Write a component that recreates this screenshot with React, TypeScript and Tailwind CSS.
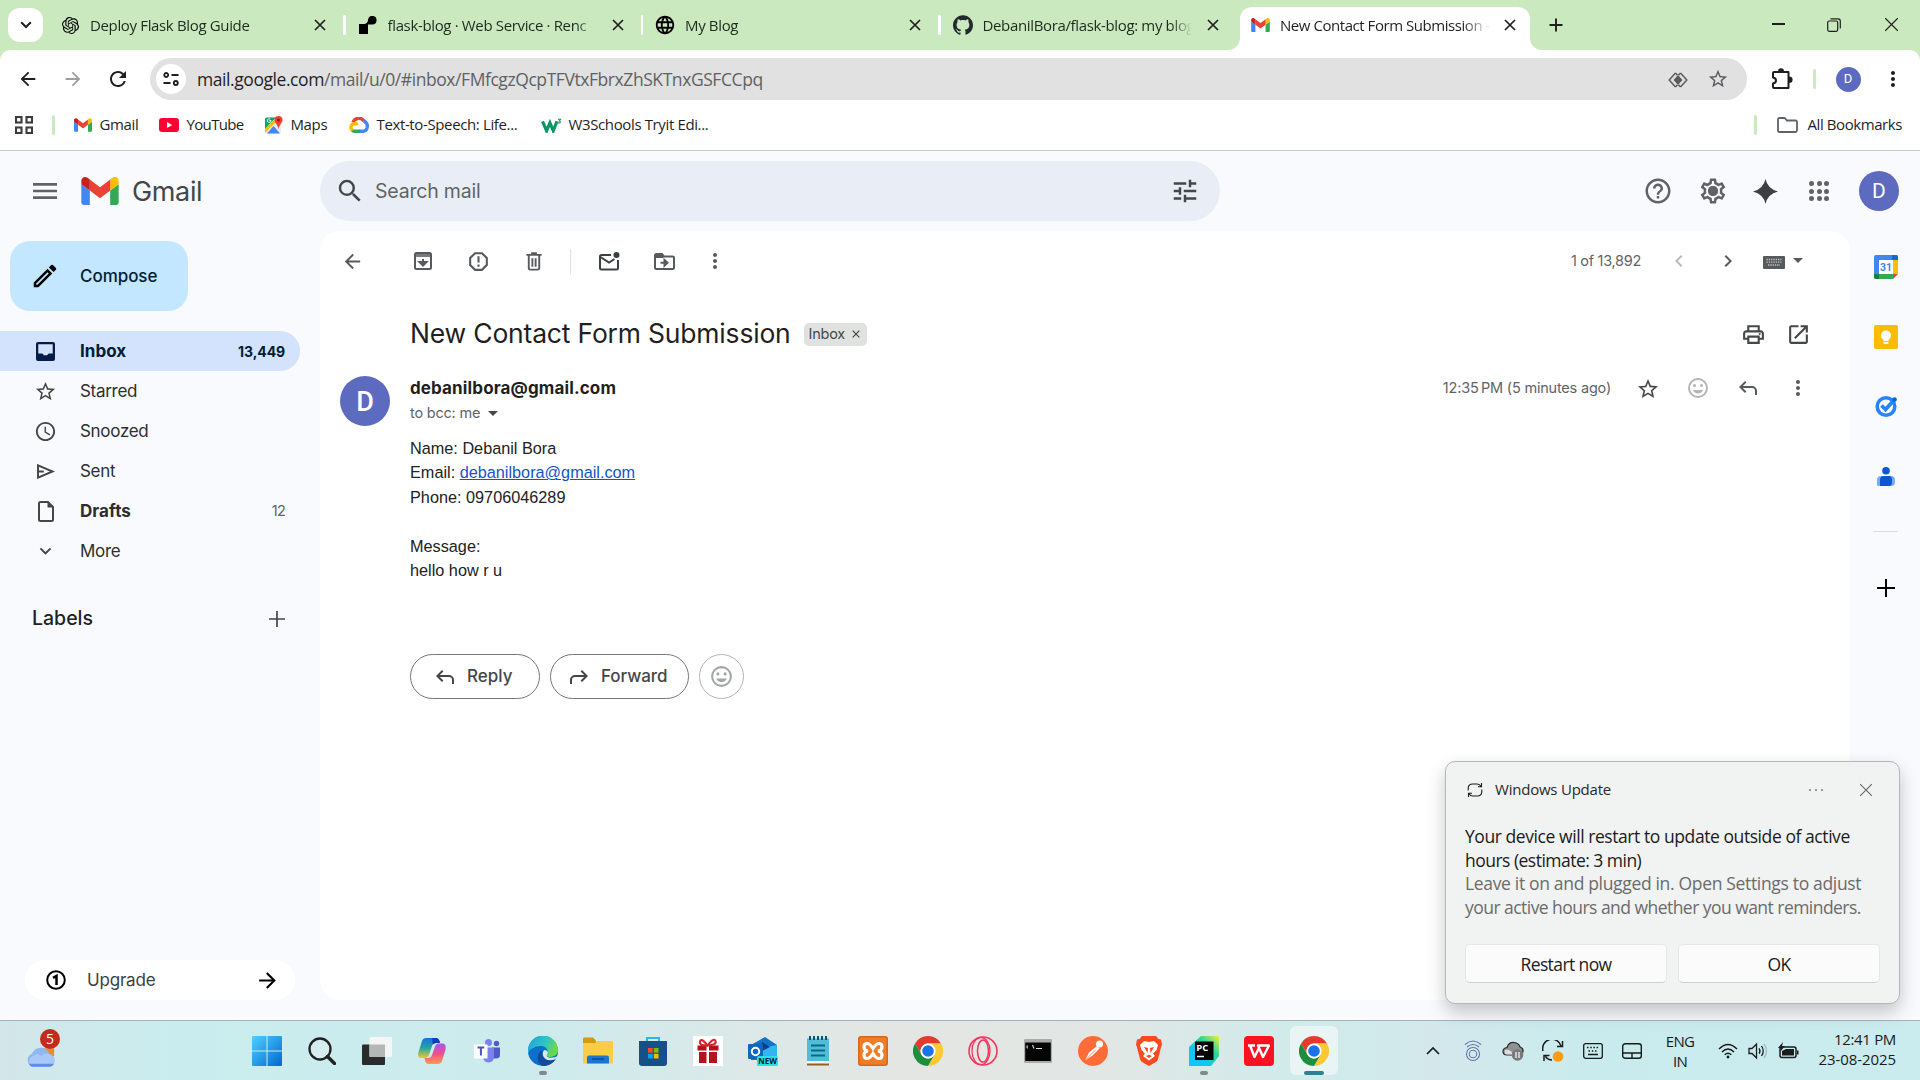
import type { ReactNode } from "react";
import {
  MdArrowBack, MdArrowForward, MdRefresh, MdStarBorder, MdMoreVert, MdMenu, MdSearch, MdTune,
  MdHelpOutline, MdOutlineSettings, MdReportGmailerrorred, MdChevronLeft,
  MdChevronRight, MdArrowDropDown, MdOutlinePrint, MdOpenInNew,
  MdOutlineModeEdit, MdAccessTime, MdExpandMore, MdLanguage,
} from "react-icons/md";
import { SiOpenai, SiGithub } from "react-icons/si";

/* ---------- shared drawings ---------- */

function GmailMark({ className }: { className: string }) {
  return (
    <svg viewBox="52 42 88 66" className={className}>
      <path fill="#4285f4" d="M58 108h14V74L52 59v43c0 3.32 2.69 6 6 6" />
      <path fill="#34a853" d="M120 108h14c3.32 0 6-2.69 6-6V59l-20 15" />
      <path fill="#fbbc04" d="M120 48v26l20-15v-8c0-7.42-8.47-11.65-14.4-7.2" />
      <path fill="#ea4335" d="M72 74V48l24 18 24-18v26L96 92" />
      <path fill="#c5221f" d="M52 51v8l20 15V48l-5.6-4.2c-5.94-4.45-14.4-.22-14.4 7.2" />
    </svg>
  );
}

function ReplyIcon({ className }: { className: string }) {
  return (
    <svg viewBox="0 0 24 24" className={className} fill="currentColor">
      <path d="M19 19v-4a3 3 0 0 0-3-3H6.8l3.6 3.6L9 17l-6-6 6-6 1.4 1.4L6.8 10H16a5 5 0 0 1 5 5v4z" />
    </svg>
  );
}

function Smiley({ className }: { className: string }) {
  return (
    <svg viewBox="0 0 24 24" className={className}>
      <circle cx="12" cy="12" r="9" fill="none" stroke="currentColor" strokeWidth="2" />
      <circle cx="8.5" cy="9.5" r="1.5" fill="currentColor" />
      <circle cx="15.5" cy="9.5" r="1.5" fill="currentColor" />
      <path d="M6.9 14h10.2a5.5 5.5 0 0 1-10.2 0z" fill="currentColor" />
    </svg>
  );
}

function Cross({ className, width = 1.4 }: { className: string; width?: number }) {
  return (
    <svg viewBox="0 0 12 12" className={className} fill="none" stroke="currentColor" strokeWidth={width}>
      <path d="M1 1l10 10M11 1L1 11" />
    </svg>
  );
}

function ChromeIcon() {
  return (
    <svg viewBox="0 0 48 48" className="size-[30px]">
      <path fill="#e33b2e" d="M3.215 12A24 24 0 0 1 44.785 12H24A12 12 0 0 0 13.608 30z" />
      <path fill="#fcc934" d="M44.785 12A24 24 0 0 1 24 48L34.392 30A12 12 0 0 0 24 12z" />
      <path fill="#1e8e3e" d="M24 48A24 24 0 0 1 3.215 12L13.608 30A12 12 0 0 0 34.392 30z" />
      <circle cx="24" cy="24" r="12" fill="#fff" />
      <circle cx="24" cy="24" r="9.3" fill="#1a73e8" />
    </svg>
  );
}

/* ---------- browser chrome ---------- */

function Tab({ icon, title, last }: { icon: ReactNode; title: string; last?: boolean }) {
  return (
    <div className="flex h-full w-[297.5px] shrink-0 items-center">
      <div className="ml-[12px] flex w-[22px] shrink-0 items-center justify-center">{icon}</div>
      <div className="ml-[9px] w-[209px] whitespace-nowrap text-[15px] leading-5 tracking-[-0.35px] text-[#1f2a1f] [mask-image:linear-gradient(to_right,#000_90%,transparent)]">
        {title}
      </div>
      <Cross className="ml-[15px] size-[12px] shrink-0 text-[#1f1f1f]" width={1.7} />
      <div className={last ? "hidden" : "ml-auto mr-[-1px] h-5 w-[2.5px] rounded bg-white"} />
    </div>
  );
}

function TabStrip() {
  return (
    <div className="flex h-[50px] items-center bg-[#cbe9bf] pr-[21px]">
      <div className="ml-2 flex h-[34px] w-[35px] items-center justify-center rounded-[12px] bg-white">
        <svg viewBox="0 0 12 8" className="h-[8px] w-[12px]" fill="none" stroke="#1f1f1f" strokeWidth="2">
          <path d="M1.200 1.200L6 6l4.800-4.800" />
        </svg>
      </div>
      <div className="ml-[4px] flex h-full">
        <Tab icon={<SiOpenai className="size-[17px]" />} title="Deploy Flask Blog Guide" />
        <Tab
          icon={
            <svg viewBox="0 0 18 18" className="size-[18px]">
              <path d="M0 8h4.500a4 4 0 0 0 4.500-4.500A4.300 4.300 0 1 1 13.200 8.500H9V18H0z" />
            </svg>
          }
          title="flask-blog · Web Service · Renc"
        />
        <Tab icon={<MdLanguage className="size-[22px]" />} title="My Blog" />
        <Tab icon={<SiGithub className="size-[20px] text-[#24292f]" />} title="DebanilBora/flask-blog: my blog" last />
      </div>
      <div className="relative mt-[7px] ml-[3px] flex h-[43px] w-[290px] items-center rounded-t-[12px] bg-white">
        <svg viewBox="0 0 12 12" className="absolute bottom-0 -left-3 size-3" fill="#fff"><path d="M12 0v12H0A12 12 0 0 0 12 0z" /></svg>
        <svg viewBox="0 0 12 12" className="absolute -right-3 bottom-0 size-3" fill="#fff"><path d="M0 0v12h12A12 12 0 0 1 0 0z" /></svg>
        <GmailMark className="mt-[-7px] ml-[11px] h-[14px] w-[19px]" />
        <div className="mt-[-7px] ml-[10px] w-[211px] whitespace-nowrap text-[15px] leading-5 tracking-[-0.45px] text-[#1f1f1f] [mask-image:linear-gradient(to_right,#000_86%,transparent)]">
          New Contact Form Submission -
        </div>
        <Cross className="mt-[-7px] ml-[13px] size-[12px] shrink-0 text-[#1f1f1f]" width={1.7} />
      </div>
      <svg viewBox="0 0 14 14" className="ml-[19px] size-[14px]" stroke="#1f1f1f" strokeWidth="1.900"><path d="M7 .5v13M.5 7h13" /></svg>
      <div className="mt-[-1px] ml-auto flex items-center text-[#1f1f1f]">
        <div className="mt-[-1px] mr-[42px] h-[1.500px] w-[13px] bg-[#1f1f1f]" />
        <svg viewBox="0 0 14 14" className="mr-[43.500px] size-[14px]" fill="none" stroke="currentColor" strokeWidth="1.200">
          <rect x=".7" y="3" width="10" height="10.300" rx="1.500" />
          <path d="M3.500 .8h7.500a2.300 2.300 0 0 1 2.300 2.300v7.500" />
        </svg>
        <Cross className="size-[15px]" width={0.9} />
      </div>
    </div>
  );
}

function AddressBar() {
  return (
    <div className="bg-[#cbe9bf]">
      <div className="flex h-[58px] items-center rounded-t-[10px] bg-white pt-0">
        <MdArrowBack className="ml-[17px] size-[22px] text-[#1f1f1f]" />
        <MdArrowForward className="ml-[23px] size-[22px] text-[#9e9e9e]" />
        <MdRefresh className="ml-[22px] size-[24px] text-[#1f1f1f]" />
        <div className="ml-[20px] flex h-[42px] w-[1597px] items-center rounded-full bg-[#e1e1e1]">
          <div className="ml-[6px] flex size-[30px] items-center justify-center rounded-full bg-white">
            <svg viewBox="0 0 16 14" className="h-[14px] w-[16px]" fill="none" stroke="#1f1f1f" strokeWidth="1.800">
              <circle cx="3.200" cy="3" r="2" /><path d="M8.500 3H15.500M.5 11h7" /><circle cx="12.800" cy="11" r="2" />
            </svg>
          </div>
          <div className="ml-[11px] whitespace-nowrap text-[17.5px] leading-6 tracking-[-0.43px] text-[#5f6164]">
            <span className="text-[#1f1f1f]">mail.google.com</span>/mail/u/0/#inbox/FMfcgzQcpTFVtxFbrxZhSKTnxGSFCCpq
          </div>
          <svg viewBox="0 0 20 16" className="mt-[2px] mr-[19px] ml-auto h-[16px] w-[20px]" fill="none" stroke="#5a5c5f" strokeWidth="1.500">
            <path d="M7.500 1L1.200 8l6.300 7M12.500 1l6.300 7-6.300 7M7.500 1l2 2.300M12.500 1l-2 2.300M7.500 15l2-2.300M12.500 15l-2-2.300" />
            <path d="M10 3l4.500 5-4.500 5-4.500-5z" fill="#5a5c5f" stroke="none" />
          </svg>
          <MdStarBorder className="mr-[18px] size-[22px] text-[#5a5c5f]" />
        </div>
        <svg viewBox="0 0 22 22" className="ml-[24px] size-[22px]" fill="none" stroke="#1f1f1f" strokeWidth="2">
          <path d="M3 4h14.500V20H3q-1 0-1-1v-3.500q3-.5 3-3t-3-3V5q0-1 1-1z" strokeLinejoin="round" />
          <path d="M8 3.500a2 2.300 0 0 1 4 0zM18 9.500a2.300 2 0 0 1 0 4.500z" fill="#1f1f1f" />
        </svg>
        <div className="ml-[20px] h-[20px] w-[2.500px] rounded bg-[#cbe9bf]" />
        <div className="ml-[20px] flex size-[25px] items-center justify-center rounded-full bg-[#5c6bc0] font-[Roboto] text-[13px] text-white">D</div>
        <MdMoreVert className="ml-[20px] size-[24px] text-[#1f1f1f]" />
      </div>
    </div>
  );
}

function BookmarksBar() {
  const label = "text-[15px] leading-5 tracking-[-0.37px] text-[#1f1f1f] whitespace-nowrap pb-[2px]";
  return (
    <div className="flex h-[43px] items-start border-b border-[#c9cbcf] bg-white">
      <div className="flex h-[34px] w-full items-center">
        <svg viewBox="0 0 18 18" className="ml-[15px] size-[18px]" fill="none" stroke="#3c3c3c" strokeWidth="2.100">
          <rect x="1" y="1" width="5.500" height="5.500" /><rect x="11.500" y="1" width="5.500" height="5.500" />
          <rect x="1" y="11.500" width="5.500" height="5.500" /><rect x="11.500" y="11.500" width="5.500" height="5.500" />
        </svg>
        <div className="ml-[19px] h-5 w-[2.500px] rounded bg-[#cbe9bf]" />
        <GmailMark className="ml-[19px] h-[14px] w-[18px]" />
        <span className={`${label} ml-[8px] w-[40px]`}>Gmail</span>
        <svg viewBox="0 0 20 14" className="ml-[19px] h-[14px] w-[20px]"><rect width="20" height="14" rx="3.200" fill="#f03" /><path d="M8 4l5.200 3L8 10z" fill="#fff" /></svg>
        <span className="ml-[8px] w-[58px] whitespace-nowrap pb-[2px] text-[15px] leading-5 tracking-[-0.65px] text-[#1f1f1f]">YouTube</span>
        <svg viewBox="0 0 18 18" className="ml-[20px] size-[18px]">
          <rect x="0" y="1.500" width="16" height="16" rx="1.500" fill="#e8eaed" />
          <path d="M1.500 1.500H11L0 13V3a1.500 1.500 0 0 1 1.500-1.500z" fill="#1aa260" />
          <path d="M2 17.500L8.500 10l6.500 7.500z" fill="#4285f4" />
          <path d="M0 13l9-9 2 2-11 11z" fill="#fbbc04" />
          <path d="M13.500 0a4 4 0 0 1 4 4c0 3-3 4-4 9-1-5-4-6-4-9a4 4 0 0 1 4-4z" fill="#ea4335" /><circle cx="13.500" cy="4" r="1.500" fill="#8c1f17" />
          <path d="M6 4.500H4.500M6 4.500A1.800 1.800 0 1 1 5 3" fill="none" stroke="#fff" strokeWidth=".9" />
        </svg>
        <span className={`${label} ml-[8px] w-[38px]`}>Maps</span>
        <svg viewBox="0 0 20 16" className="ml-[20px] h-[16px] w-[20px]" fill="none" strokeWidth="3.400">
          <path d="M4 5.500A6.200 6.200 0 0 1 15 4" stroke="#ea4335" />
          <path d="M14.500 4a5 5 0 0 1 3.300 7" stroke="#4285f4" />
          <path d="M18 11a4 4 0 0 1-3.500 3.200H10" stroke="#4285f4" />
          <path d="M10.500 14.200H5.500A3.800 3.800 0 0 1 3 13.300" stroke="#34a853" />
          <path d="M3.500 13.500A3.900 3.900 0 0 1 5.500 6.500a3.900 3.900 0 0 1 3 1.500" stroke="#fbbc04" />
        </svg>
        <span className={`${label} ml-[8px] w-[144px]`}>Text-to-Speech: Life...</span>
        <svg viewBox="0 0 20 14" className="ml-[20px] h-[15px] w-[21px]" fill="none" stroke="#059862">
          <path d="M1.500 3l3.800 9L8.500 4.500l3.200 7.500 3.500-9" strokeWidth="3" />
          <path d="M16.200 1h2.500l-1.300 1.700c1.300 0 1.800 2.500-1.200 1.800" strokeWidth="1" />
        </svg>
        <span className={`${label} ml-[7px]`}>W3Schools Tryit Edi...</span>
        <div className="mr-[20px] ml-auto h-5 w-[2.500px] rounded bg-[#cbe9bf]" />
        <svg viewBox="0 0 21 16" className="h-[16px] w-[21px]" fill="none" stroke="#5f6368" strokeWidth="1.800"><path d="M2.500 1h5.200l2.200 2.500h8.600q1.500 0 1.500 1.500v8.500q0 1.500-1.500 1.500h-16q-1.500 0-1.500-1.500V2.500q0-1.500 1.500-1.500z" /></svg>
        <span className="mr-[18px] ml-[10px] whitespace-nowrap pb-[2px] text-[15px] leading-5 tracking-[-0.42px] text-[#1f1f1f]">All Bookmarks</span>
      </div>
    </div>
  );
}

/* ---------- mail client ---------- */

function MailHeader() {
  return (
    <div className="flex h-[80px] items-center text-[#444746]">
      <MdMenu className="ml-[29px] size-[32px] text-[#5f6368]" />
      <GmailMark className="ml-[20px] h-[28px] w-[38px]" />
      <span className="ml-[13px] w-[188px] pt-[2px] text-[27px] leading-8 tracking-[-0.35px]">Gmail</span>
      <div className="flex h-[60px] w-[900px] items-center rounded-full bg-[#e9eef6]">
        <MdSearch className="ml-[15px] size-[30px]" />
        <span className="ml-[10px] text-[19.500px] leading-6 tracking-[-0.2px] text-[#5f6368]">Search mail</span>
        <MdTune className="mr-[20px] ml-auto size-[30px]" />
      </div>
      <MdHelpOutline className="ml-[423px] size-[30px] text-[#5f6368]" />
      <div className="relative ml-[25px]">
        <MdOutlineSettings className="size-[30px] text-[#5f6368]" />
        <div className="absolute top-[10px] left-[10px] size-[10px] rounded-full bg-[#5f6368]" />
      </div>
      <svg viewBox="0 0 24 24" className="ml-[25px] size-[25px]" fill="#3c4043"><path d="M12 0q2 9.500 12 12-10 2.500-12 12Q10 14.500 0 12 10 9.500 12 0z" /></svg>
      <div className="ml-[31px] grid grid-cols-3 gap-[2.500px]">
        {[0, 1, 2, 3, 4, 5, 6, 7, 8].map((i) => <div key={i} className="size-[5px] rounded-full bg-[#5f6368]" />)}
      </div>
      <div className="ml-[30px] flex size-[40px] items-center justify-center rounded-full bg-[#5c6bc0] pt-[2px] font-[Roboto] text-[21px] text-white">D</div>
    </div>
  );
}

function NavRow({ icon, text, count, bold, active }: { icon: ReactNode; text: string; count?: string; bold?: boolean; active?: boolean }) {
  return (
    <div className={active ? "flex h-[40px] w-[300px] items-center rounded-r-full bg-[#d3e3fd] text-[#001d35]" : "flex h-[40px] w-[300px] items-center text-[#2c2e30]"}>
      <div className={active ? "ml-[34px] flex w-[23px] justify-center text-[#041e49]" : "ml-[34px] flex w-[23px] justify-center text-[#444746]"}>{icon}</div>
      <span className={bold ? "ml-[23px] pt-[2px] text-[17px] font-bold tracking-[0.05px]" : "ml-[23px] pt-[2px] text-[17px] tracking-[-0.3px]"}>{text}</span>
      <span className={active ? "mr-[15px] ml-auto text-[14px] font-bold tracking-[-0.1px]" : "mr-[15px] ml-auto text-[14.500px] tracking-[-0.8px] text-[#5f6368]"}>{count}</span>
    </div>
  );
}

function Sidebar() {
  return (
    <div className="flex w-[320px] shrink-0 flex-col">
      <div className="mt-[10px] ml-[10px] flex h-[70px] w-[178px] items-center rounded-[20px] bg-[#c2e7ff] text-[#001d35]">
        <MdOutlineModeEdit className="ml-[20px] size-[30px] text-black" />
        <span className="ml-[20px] pt-[2px] text-[17px] font-medium tracking-[-0.05px]">Compose</span>
      </div>
      <div className="mt-[20px]">
        <NavRow
          active
          bold
          icon={<svg viewBox="0 0 19 19" className="size-[19px]"><rect width="19" height="19" rx="2" fill="#041e49" /><path d="M2.300 2.300h14.400v9.200h-4L11 13.200H8l-1.700-1.700h-4z" fill="#d3e3fd" /></svg>}
          text="Inbox"
          count="13,449"
        />
        <NavRow icon={<MdStarBorder className="size-[23px]" />} text="Starred" />
        <NavRow icon={<MdAccessTime className="size-[25px]" />} text="Snoozed" />
        <NavRow
          icon={<svg viewBox="0 0 20 17" className="h-[15px] w-[19px]" fill="none" stroke="currentColor" strokeWidth="2.200"><path d="M1.500 1.500v14L18 8.500zM1.500 8.500H8" /></svg>}
          text="Sent"
        />
        <NavRow
          bold
          icon={<svg viewBox="0 0 16 21" className="h-[21px] w-[16px]" fill="none" stroke="currentColor" strokeWidth="2"><path d="M2.500 1H10l5 5v12.500q0 1.500-1.500 1.500h-11Q1 20 1 18.500v-16Q1 1 2.500 1z" /><path d="M9.500 1v5.500H15z" fill="currentColor" stroke="none" /></svg>}
          text="Drafts"
          count="12"
        />
        <NavRow icon={<MdExpandMore className="size-[24px]" />} text="More" />
      </div>
      <div className="mt-[27px] flex h-[40px] items-center">
        <span className="ml-[32px] pt-[2px] text-[19.500px] font-medium tracking-[0px] text-[#1f1f1f]">Labels</span>
        <svg viewBox="0 0 16 16" className="mt-[1px] mr-[35px] ml-auto size-[16px]" stroke="#444746" strokeWidth="1.700"><path d="M8 0v16M0 8h16" /></svg>
      </div>
      <div className="mt-auto mb-[20px] ml-[25px] flex h-[40px] w-[270px] items-center rounded-full bg-white">
        <svg viewBox="0 0 20 20" className="ml-[21px] size-[20px]" fill="none" stroke="#000"><circle cx="10" cy="10" r="8.800" strokeWidth="2" /><path d="M7 7.800l3.500-2V15" strokeWidth="2.500" /></svg>
        <span className="ml-[21px] pt-[2px] text-[17px] tracking-[-0.2px] text-[#3c4043]">Upgrade</span>
        <MdArrowForward className="mr-[15px] ml-auto size-[25px] text-black" />
      </div>
    </div>
  );
}

function MailToolbar() {
  return (
    <div className="flex h-[60px] items-center text-[#575a5c]">
      <MdArrowBack className="ml-[21px] size-[23px]" />
      <svg viewBox="0 0 18 18" className="ml-[50px] size-[18px]" fill="none" stroke="currentColor" strokeWidth="2">
        <rect x="1" y="1" width="16" height="16" rx="1.500" /><path d="M1 3h16" strokeWidth="4" strokeOpacity=".8" /><path d="M9 7v6M5.500 10l3.500 3.500L12.500 10z" />
      </svg>
      <MdReportGmailerrorred className="ml-[34px] size-[25px]" />
      <svg viewBox="0 0 16 20" className="ml-[34.500px] h-[19px] w-[16px]" fill="none" stroke="currentColor" strokeWidth="2">
        <path d="M0 3h16M5 1.200h6M2.500 3v14q0 1.500 1.500 1.500h8q1.500 0 1.500-1.500V3M6.300 6.500v9M9.700 6.500v9" />
      </svg>
      <div className="ml-[28.500px] h-[25px] w-px bg-[#dfe1e4]" />
      <svg viewBox="0 0 21 19" className="ml-[27.500px] h-[19px] w-[21px] text-[#3c4043]" fill="none" stroke="currentColor" strokeWidth="2">
        <path d="M12 3H2.500Q1 3 1 4.500v11.500q0 1.500 1.500 1.500h15q1.500 0 1.500-1.500V8M1.500 5l8.500 5.500L15.500 7" /><circle cx="17.500" cy="3" r="3" fill="currentColor" stroke="none" />
      </svg>
      <svg viewBox="0 0 21 17" className="ml-[34.500px] h-[17px] w-[21px]" fill="none" stroke="currentColor" strokeWidth="2">
        <path d="M2.500 1H8l2 2.500h8.500Q20 3.500 20 5v9.500q0 1.500-1.500 1.500h-16Q1 16 1 14.500v-12Q1 1 2.500 1z" /><path d="M1.500 3.500h8" strokeWidth="3" /><path d="M6.500 9.800h7M10.500 7l3 2.800-3 2.800z" />
      </svg>
      <MdMoreVert className="ml-[28px] size-[24px]" />
      <span className="ml-auto whitespace-nowrap text-[14.500px] tracking-[-0.3px] text-[#5f6368]">1 of 13,892</span>
      <MdChevronLeft className="ml-[26px] size-[24px] text-[#b8babc]" />
      <MdChevronRight className="ml-[25px] size-[24px]" />
      <svg viewBox="0 0 22 13" className="mt-[3px] ml-[23px] h-[13px] w-[22px]">
        <rect width="22" height="13" rx="1" fill="currentColor" />
        <path d="M3.500 3.500h15M3.500 6.200h15M5 9h12" stroke="#c4c6c8" strokeWidth="1.300" strokeDasharray="1.300 1" />
      </svg>
      <MdArrowDropDown className="mt-[-3px] mr-[40px] ml-[1px] size-[24px]" />
    </div>
  );
}

function Message() {
  return (
    <div className="flex flex-1 flex-col rounded-[20px] bg-white">
      <MailToolbar />
      <div className="mt-[23px] flex h-[40px] items-center">
        <h1 className="ml-[90px] whitespace-nowrap text-[26.500px] tracking-[-0.2px] text-[#1f1f1f]">New Contact Form Submission</h1>
        <div className="ml-[13px] flex h-[23px] w-[63px] items-center rounded-[5px] bg-[#e0e2e0] text-[14.500px] tracking-[-0.25px] text-[#444746]">
          <span className="ml-[5px]">Inbox</span>
          <Cross className="ml-[7px] size-[8px]" width={1.8} />
        </div>
        <MdOutlinePrint className="ml-auto size-[25px] text-[#444746]" />
        <MdOpenInNew className="mr-[39px] ml-[20px] size-[25px] text-[#444746]" />
      </div>
      <div className="mt-[17px] flex">
        <div className="mt-[5px] ml-[20px] flex size-[50px] items-center justify-center rounded-full bg-[#5c6bc0] pt-[2px] font-[Roboto] text-[27px] font-medium text-white">D</div>
        <div className="ml-[20px]">
          <div className="h-[33px] text-[17px] leading-[35px] font-bold tracking-[0.13px] text-[#1f1f1f]">debanilbora@gmail.com</div>
          <div className="flex h-[18px] items-center text-[14.500px] tracking-[-0.2px] text-[#5f6368]">
            to bcc: me <MdArrowDropDown className="ml-[1px] size-[24px] text-[#444746]" />
          </div>
          <div className="mt-[14px] h-[150px] whitespace-nowrap font-['Liberation_Sans'] text-[16.250px] leading-[24.400px] text-[#222]">
            <div>Name: Debanil Bora</div>
            <div>Email: <span className="text-[#1155cc] underline">debanilbora@gmail.com</span></div>
            <div>Phone: 09706046289</div>
            <div className="mt-[24.400px]">Message:</div>
            <div>hello how r u</div>
          </div>
        </div>
        <div className="ml-auto flex h-[34px] items-center text-[#575a5c]">
          <span className="mr-[25px] whitespace-nowrap text-[14.500px] tracking-[-0.2px] text-[#5f6368]">12:35&#8239;PM (5 minutes ago)</span>
          <MdStarBorder className="mt-[2px] size-[24px] text-[#444746]" />
          <Smiley className="ml-[26px] size-[24px] text-[#b3b5b7]" />
          <ReplyIcon className="ml-[26px] size-[24px]" />
          <MdMoreVert className="mr-[40.500px] ml-[25.500px] size-[24px]" />
        </div>
      </div>
      <div className="mt-[68px] ml-[90px] flex gap-[10px] text-[17px] font-medium text-[#444746]">
        <div className="flex h-[45px] w-[130px] items-center rounded-full border border-[#747775]">
          <ReplyIcon className="ml-[22px] size-[24px]" /><span className="ml-[10px] tracking-[0px]">Reply</span>
        </div>
        <div className="flex h-[45px] w-[139px] items-center rounded-full border border-[#747775]">
          <ReplyIcon className="ml-[16px] size-[24px] -scale-x-100" /><span className="ml-[10px] tracking-[-0.05px]">Forward</span>
        </div>
        <div className="flex size-[45px] items-center justify-center rounded-full border border-[#b3b5b7] text-[#a3a5a7]">
          <Smiley className="size-[25px]" />
        </div>
      </div>
    </div>
  );
}

function SidePanel() {
  return (
    <div className="flex w-[70px] shrink-0 flex-col items-center pl-[1px]">
      <svg viewBox="0 0 24 24" className="mt-[24px] size-[24px]">
        <rect width="24" height="24" rx="2" fill="#4285f4" /><path d="M18 5h6v14h-6z" fill="#fbbc04" /><path d="M18 0h4q2 0 2 2v3h-6z" fill="#1967d2" />
        <path d="M5 19h14v5H5z" fill="#34a853" /><path d="M0 19h5v5H2q-2 0-2-2z" fill="#188038" /><path d="M19 19h5l-5 5z" fill="#ea4335" /><path d="M24 19v5h-5z" fill="#f9fbfe" />
        <path d="M5 5h14v14H5z" fill="#fff" /><text x="12" y="16" textAnchor="middle" fontSize="10.500" fontWeight="700" fontFamily="Roboto" fill="#4285f4">31</text>
      </svg>
      <svg viewBox="0 0 24 24" className="mt-[46px] size-[24px]">
        <rect width="24" height="24" rx="2" fill="#fbbc04" /><circle cx="12" cy="10.500" r="5" fill="#fff" /><path d="M9.500 13h5v3h-5zM9.500 17h5v1.800h-5z" fill="#fff" />
      </svg>
      <svg viewBox="0 0 24 24" className="mt-[45px] size-[24px]" fill="none">
        <circle cx="12" cy="12.500" r="8.800" stroke="#2684fc" strokeWidth="3.500" /><path d="M7.500 11.500l4 4L21 5" stroke="#2684fc" strokeWidth="3.800" /><circle cx="20.500" cy="5.500" r="2.300" fill="#0066da" />
      </svg>
      <svg viewBox="0 0 18 19" className="mt-[49px] h-[19px] w-[18px]">
        <path d="M4 9h10q4 0 4 4v2q0 4-4 4H1.500Q0 19 0 17.500V13q0-4 4-4z" fill="#7baaf7" /><path d="M7 9h5q3 0 3 4v2q0 4-3 4H3v-6q0-4 4-4z" fill="#0b57d0" /><circle cx="9" cy="3.800" r="3.800" fill="#0b57d0" />
      </svg>
      <div className="mt-[45px] h-px w-[25px] bg-[#dadce0]" />
      <svg viewBox="0 0 18 18" className="mt-[47px] size-[18px]" stroke="#000" strokeWidth="2"><path d="M9 0v18M0 9h18" /></svg>
    </div>
  );
}

/* ---------- notification ---------- */

function Toast() {
  const button = "flex h-[39px] flex-1 items-center justify-center rounded-[5px] border border-b-[#cfcfcf] border-[#e6e6e6] bg-[#fbfbfb] tracking-[-0.6px]";
  return (
    <div className="absolute top-[761px] left-[1445px] h-[243px] w-[455px] rounded-[10px] border border-[#b4b6b8] bg-[#f1f2f2] px-[19px] shadow-[0_8px_18px_rgba(0,0,0,0.22)]">
      <div className="mt-[16px] flex h-[24px] items-center">
        <svg viewBox="0 0 16 16" className="ml-[2px] size-[16px]" fill="none" stroke="#1b1b1b" strokeWidth="1.100">
          <path d="M1.200 8.500V6.500q0-4.500 4.500-4.500h4.500q2.500 0 3.800 2.500M14.500 1v3.700H11M14.800 7.500v2q0 4.500-4.500 4.500H5.700q-2.500 0-3.800-2.500M1.500 15v-3.700H5" />
        </svg>
        <span className="ml-[12px] pb-[2px] text-[15px] tracking-[-0.22px] text-[#2a2a2a]">Windows Update</span>
        <svg viewBox="0 0 14 2" className="mr-[36px] ml-auto h-[2px] w-[14px]" fill="#707070"><circle cx="1" cy="1" r=".9" /><circle cx="7" cy="1" r=".9" /><circle cx="13" cy="1" r=".9" /></svg>
        <Cross className="mr-[7px] size-[14px] text-[#6b6b6b]" width={1} />
      </div>
      <div className="mt-[23px] whitespace-nowrap text-[17.500px] leading-[23.600px] text-[#1b1b1b]">
        <div className="tracking-[-0.43px]">Your device will restart to update outside of active</div>
        <div className="tracking-[-0.52px]">hours (estimate: 3 min)</div>
        <div className="tracking-[-0.33px] text-[#6a6c6c]">Leave it on and plugged in. Open Settings to adjust</div>
        <div className="tracking-[-0.54px] text-[#6a6c6c]">your active hours and whether you want reminders.</div>
      </div>
      <div className="mt-[25px] flex gap-[11px] text-[17.500px] text-[#1b1b1b]">
        <div className={button}>Restart now</div>
        <div className={button}>OK</div>
      </div>
    </div>
  );
}

/* ---------- taskbar ---------- */

function TaskIcon({ children, running, active }: { children: ReactNode; running?: boolean; active?: boolean }) {
  return (
    <div className={active ? "relative mx-[3.500px] flex h-[49px] w-[48px] shrink-0 items-center justify-center rounded-[6px] bg-[#e9f4f5]" : "relative flex h-[49px] w-[55.100px] shrink-0 items-center justify-center"}>
      {children}
      <div className={active ? "absolute bottom-0 h-[4px] w-[20px] rounded bg-[#2b8296]" : running ? "absolute bottom-0 h-[4px] w-[8px] rounded bg-[#7e8a8c]" : "hidden"} />
    </div>
  );
}

function Taskbar() {
  return (
    <div className="flex h-[60px] items-center border-t border-[#a3b4b7] bg-[linear-gradient(to_right,#d3e6ea_0%,#c9edee_9%,#cdebed_28%,#dbe9e8_38%,#e4e6e3_47%,#e1e7e5_58%,#cfebea_68%,#d4e8ec_75%,#caebed_82%,#cbecee_100%)]">
      <div className="relative ml-[25px] h-[40px] w-[36px]">
        <svg viewBox="0 0 32 24" className="absolute top-[13px] left-[1px] h-[24px] w-[31px]">
          <path d="M15 4h14v8H18z" fill="#f08a24" />
          <path d="M7 23a7 7 0 0 1-1-13.200Q9 3 16 3.500q6 .5 8 6A7 7 0 0 1 24.500 23z" fill="#8fb7f2" />
          <path d="M6.500 23a6 6 0 0 1 1-11q4-4 8 0 6-5 11 0A6 6 0 0 1 25 23z" fill="#a9c8f8" /><path d="M3 20h26q-1.500 3-4.500 3h-18Q4 23 3 20z" fill="#5f8fe0" />
        </svg>
        <div className="absolute top-[-2px] left-[15px] flex size-[20px] items-center justify-center rounded-full bg-[#c42b1c] text-[14px] leading-none text-white">5</div>
      </div>
      <div className="ml-[178.500px] flex items-center">
        <TaskIcon>
          <svg viewBox="0 0 30 30" className="size-[30px]"><defs><linearGradient id="win" x1="0" y1="0" x2="1" y2="1"><stop stopColor="#4fd0ff" /><stop offset="1" stopColor="#0069d0" /></linearGradient></defs><path fill="url(#win)" d="M0 1q0-1 1-1h13.500v14.500H0zM15.500 0H29q1 0 1 1v13.500H15.500zM0 15.500h14.500V30H1q-1 0-1-1zM15.500 15.500H30V29q0 1-1 1H15.500z" /></svg>
        </TaskIcon>
        <TaskIcon>
          <svg viewBox="0 0 28 28" className="size-[28px]" fill="none" stroke="#222"><circle cx="12" cy="12" r="10.500" strokeWidth="2.300" fill="#e6eeee" fillOpacity=".4" /><path d="M19.500 19.500l7 7" strokeWidth="3.300" strokeLinecap="round" /></svg>
        </TaskIcon>
        <TaskIcon>
          <svg viewBox="0 0 30 28" className="h-[28px] w-[30px]"><rect y="7.500" width="23" height="20.500" rx="1" fill="#2b2b2b" /><rect x="7.500" width="22.500" height="20" rx="1" fill="#f5f5f5" /><path d="M7.500 7.500H23V20H7.500z" fill="#b5b7b7" /></svg>
        </TaskIcon>
        <TaskIcon>
          <svg viewBox="0 0 28 26" className="h-[26px] w-[28px]">
            <defs><linearGradient id="cpA" x1="0" y1="0" x2="0" y2="1"><stop stopColor="#1b6fe0" /><stop offset=".5" stopColor="#23a7a0" /><stop offset="1" stopColor="#f4c52f" /></linearGradient><linearGradient id="cpB" x1="0" y1="0" x2="0" y2="1"><stop stopColor="#a259f0" /><stop offset=".5" stopColor="#ef4f8e" /><stop offset="1" stopColor="#ff9d4d" /></linearGradient></defs>
            <path d="M8 0h10q3 0 4 5h-4q-3 0-4 3l-3 9q-1 3-4 3H3q-4 0-2.500-6L4 3q1-3 4-3z" fill="url(#cpA)" />
            <path d="M20 26H10q-2.500 0-3.500-6H10q3 0 4-3l3-8.500q1-3 4-3h3.500q4 0 3 6L24 23q-1 3-4 3z" fill="url(#cpB)" /><path d="M14 0h4q3 0 4 5h-4q-2 0-3.200 1.500z" fill="#0f3fb8" />
          </svg>
        </TaskIcon>
        <TaskIcon>
          <svg viewBox="0 0 26 24" className="h-[24px] w-[26px]"><circle cx="14.500" cy="3.500" r="3.500" fill="#7b83eb" /><circle cx="22.500" cy="4.500" r="2.700" fill="#5059c9" /><path d="M18 8.500h8v7.500q0 3.500-4 3.500h-4z" fill="#5059c9" /><path d="M9 8.500h11V17q0 6.500-5.500 6.500T9 17z" fill="#7b83eb" /><rect y="5.500" width="13.500" height="14" fill="#fff" /><path d="M3.500 8.500h6.800M6.900 8.500v8" stroke="#4b53bc" strokeWidth="2" /></svg>
        </TaskIcon>
        <TaskIcon running>
          <svg viewBox="0 0 30 30" className="size-[30px]">
            <defs><linearGradient id="edA" x1="0" y1="0" x2="1" y2=".4"><stop stopColor="#1f9fdc" /><stop offset=".6" stopColor="#2fc4c8" /><stop offset="1" stopColor="#6ad84a" /></linearGradient></defs>
            <circle cx="15" cy="15" r="15" fill="#0c6fc9" />
            <path d="M0 15A15 15 0 0 1 30 14c0 5-4 7-8 7-3 0-4-1.500-3-3 2-4-1-8-6-8C7 10 1 13 0 18z" fill="url(#edA)" />
            <path d="M28.500 21.500A15 15 0 0 1 17 30C10 30 8 22 11 17c1-2 3-3 4-3-3 4 0 11 8 10 3 0 4-1.500 5.500-2.500z" fill="#15499b" />
            <path d="M16 14c4 0 4.500 3 3 4.500-1 2 1 3.200 4 3.200 3 0 5.500-1 7-2-1 3-4 4.500-8 4.500-6 0-9-6-6-10.200z" fill="#d7ecee" />
          </svg>
        </TaskIcon>
        <TaskIcon>
          <svg viewBox="0 0 30 26" className="h-[27px] w-[30px]"><path d="M0 1q0-1 1-1h9l3 3v5H0z" fill="#d49a12" /><path d="M0 5.500L12 5.500 14 3.500H29q1 0 1 1V26H0z" fill="#fbcc47" /><path d="M4 26v-6q0-2 2-2h18q2 0 2 2v6z" fill="#1976d2" /><path d="M9 21.500h12" stroke="#0b4a94" strokeWidth="1.500" /></svg>
        </TaskIcon>
        <TaskIcon>
          <svg viewBox="0 0 28 30" className="h-[30px] w-[28px]"><path d="M8 6V2h12v4" fill="none" stroke="#22b8f0" strokeWidth="2" /><path d="M0 5h28v22q0 3-3 3H3q-3 0-3-3z" fill="#174f88" /><path d="M9 12h4.700v4.700H9z" fill="#f25022" /><path d="M14.800 12h4.700v4.700h-4.700z" fill="#7fba00" /><path d="M9 17.800h4.700v4.700H9z" fill="#00a4ef" /><path d="M14.800 17.800h4.700v4.700h-4.700z" fill="#ffb900" /></svg>
        </TaskIcon>
        <TaskIcon>
          <svg viewBox="0 0 30 30" className="size-[30px]"><rect width="30" height="30" fill="#fff" /><path d="M4.500 9.500h9v5h-9zM16 9.500h9.500v5H16zM6 16h7.500v11H6zM16 16h8v11h-8z" fill="#b3131b" /><path d="M14.500 9.500Q6 10 7 5.500t7.500 4Q21 1 22.500 5t-8 4.500" fill="none" stroke="#e0202a" strokeWidth="2" /></svg>
        </TaskIcon>
        <TaskIcon>
          <svg viewBox="0 0 30 30" className="size-[30px]"><path d="M3 9L17 1l12 8v15H3z" fill="#1272c9" /><path d="M12 12l17-3v15H12z" fill="#35b4f2" /><path d="M14 6l8 5-10 5z" fill="#0a3f86" /><rect y="8" width="15" height="15" rx="1" fill="#1066b8" /><circle cx="7.500" cy="15.500" r="3.700" fill="none" stroke="#fff" strokeWidth="2" /><rect x="9" y="20" width="21" height="10" rx="1.500" fill="#27e1e8" /><text x="19.500" y="28" fontSize="8" fontWeight="700" textAnchor="middle" fontFamily="Open Sans" fill="#00222a">NEW</text></svg>
        </TaskIcon>
        <TaskIcon>
          <svg viewBox="0 0 24 30" className="h-[30px] w-[24px]"><path d="M1 2.500h22V26H1z" fill="#4fbcd8" /><path d="M1 26h22v3.500H1z" fill="#9a5b1c" /><path d="M1 25h22v2.500H1z" fill="#f4f4f4" /><path d="M4 0v4M8 0v4M12 0v4M16 0v4M20 0v4" stroke="#0c556f" strokeWidth="2" /><path d="M5 9.500h14M5 14.500h14M5 19.500h14" stroke="#0c6685" strokeWidth="2" /></svg>
        </TaskIcon>
        <TaskIcon>
          <svg viewBox="0 0 30 30" className="size-[30px]"><rect width="30" height="30" rx="3" fill="#d9661a" /><rect x="1.500" y="1.500" width="27" height="27" rx="2" fill="#ee7d28" /><path d="M9 7.500q-3 0-3 3.500t4 4q-4 .5-4 4t3 3.500q3 0 6-5 3 5 6 5t3-3.500-4-4q4-.5 4-4t-3-3.500q-3 0-6 5-3-5-6-5z" fill="none" stroke="#fff" strokeWidth="3.200" /></svg>
        </TaskIcon>
        <TaskIcon><ChromeIcon /></TaskIcon>
        <TaskIcon>
          <svg viewBox="0 0 30 30" className="size-[30px]" fill="none" stroke="#f6365f"><circle cx="15" cy="15" r="14" strokeWidth="1.600" /><ellipse cx="13" cy="15" rx="9" ry="13.500" strokeWidth="1.300" /><ellipse cx="15" cy="15" rx="5.500" ry="11" strokeWidth="1.600" /></svg>
        </TaskIcon>
        <TaskIcon>
          <svg viewBox="0 0 28 24" className="h-[24px] w-[28px]"><rect width="28" height="24" rx="1" fill="#a9abac" /><path d="M1.200 3.500h25.600v18.500H1.200z" fill="#050505" /><path d="M3.500 6.500q-1.200 1.200 0 2.800M6.500 6v.1M6.500 9v.1M8.500 6l1.500 3.500M12 9.500h6" stroke="#ddd" strokeWidth="1.100" fill="none" /></svg>
        </TaskIcon>
        <TaskIcon>
          <svg viewBox="0 0 30 30" className="size-[30px]"><circle cx="15" cy="15" r="15" fill="#ff6c37" /><path d="M7 24.500l4-8 8-6.500 2.500 2.500-7 7z" fill="#fff" /><circle cx="21.500" cy="8" r="3.500" fill="#fff" /><path d="M7 24.500l11-11" stroke="#ff6c37" strokeWidth=".8" /></svg>
        </TaskIcon>
        <TaskIcon>
          <svg viewBox="0 0 26 30" className="h-[30px] w-[26px]"><path d="M6 0h14l2.500 3 2.500.5 1 5-1 3-3 11.500q-.5 2-2 3L13 30 6 26q-1.500-1-2-3L1 11.500l-1-3 1-5L3.500 3z" fill="#fb4a1e" /><path d="M8 5l5 1 5-1 4 4-1.500 5-3.500 3.500L19 20l-6 4.500L7 20l2-2.500L5.500 14 4 9z" fill="#fff" /><path d="M8 11l4 1-.5 5zM18 11l-4 1 .5 5zM10 20l3-1.200 3 1.200-3 2z" fill="#fb4a1e" /></svg>
        </TaskIcon>
        <TaskIcon running>
          <svg viewBox="0 0 30 30" className="size-[30px]"><defs><linearGradient id="pc" x1="0" y1="1" x2="1" y2="0"><stop offset=".3" stopColor="#11c5f4" /><stop offset=".65" stopColor="#2bd39b" /><stop offset="1" stopColor="#f3f03b" /></linearGradient></defs><path d="M12 0h18v20l-8 10H0V11z" fill="url(#pc)" /><rect x="6" y="5.500" width="18.500" height="18.500" fill="#000" /><text x="7.300" y="14.800" fontSize="9.500" fontWeight="700" fontFamily="Open Sans" fill="#fff">PC</text><path d="M8 20.500h7" stroke="#fff" strokeWidth="1.500" /></svg>
        </TaskIcon>
        <TaskIcon>
          <svg viewBox="0 0 30 30" className="size-[30px]"><rect width="30" height="30" rx="4" fill="#fb1221" /><path d="M4 9.500h7M6 9.500l4.500 11.500 4.500-9 4 9 6-11.500H14l3.500 8" fill="none" stroke="#fff" strokeWidth="2.400" strokeLinejoin="round" /></svg>
        </TaskIcon>
        <TaskIcon active><ChromeIcon /></TaskIcon>
      </div>
      <div className="mr-[24px] ml-auto flex items-center text-[#1b1b1b]">
        <svg viewBox="0 0 14 8" className="h-[8px] w-[14px]" fill="none" stroke="#1b1b1b" strokeWidth="1.700"><path d="M1 7l6-6 6 6" /></svg>
        <svg viewBox="0 0 18 22" className="ml-[24px] h-[22px] w-[18px]" fill="none" stroke="#5c74a6" strokeWidth="1.100"><circle cx="9" cy="14" r="6.500" fill="#e4effa" /><circle cx="9" cy="14" r="3.800" fill="#cfe9ee" /><path d="M1 4.500q8-7 16 0M3 7q6-5 12 0" fill="none" /></svg>
        <svg viewBox="0 0 22 21" className="ml-[20px] h-[21px] w-[22px]"><path d="M5 15q-4 0-4-3.500T5 7.500Q7 2 12 2.500T18 7q3.500 1 3 4.500T17 15z" fill="#8f9292" stroke="#2a2a2a" strokeWidth="1.200" /><path d="M3 10q6-1 8 4.500H5q-3 0-2-4.500z" fill="#dedede" /><circle cx="15.500" cy="15" r="5.800" fill="#77797b" /><path d="M14 12v6M17 12v6" stroke="#fff" strokeWidth="1.200" /></svg>
        <svg viewBox="0 0 22 22" className="ml-[18px] size-[22px]" fill="none" stroke="#1b1b1b" strokeWidth="1.500"><path d="M1 11A9 9 0 0 1 19 6M20.500 1v5.500H15M2 21v-5.500h5.500M3.500 16.500Q6 20 10 20" /><circle cx="16" cy="16.500" r="5.300" fill="#ff9b0f" stroke="none" /></svg>
        <svg viewBox="0 0 20 16" className="ml-[19px] h-[16px] w-[20px]" fill="none" stroke="#1b1b1b" strokeWidth="1.300"><rect x=".7" y=".7" width="18.600" height="14.600" rx="2" /><path d="M4 4.500h1.500M7.200 4.500h1.500M10.400 4.500h1.500M13.600 4.500h1.500M5.500 8H7M8.800 8h1.500M12 8h1.500M5 11.500h10" /></svg>
        <svg viewBox="0 0 20 16" className="ml-[19px] h-[16px] w-[20px]" fill="none" stroke="#1b1b1b" strokeWidth="1.400"><rect x=".7" y=".7" width="18.600" height="14.600" rx="2.500" /><path d="M1 10h18M10 10v5" /></svg>
        <div className="ml-[24px] w-[29px] text-center text-[15px] leading-[20px] tracking-[-0.6px]"><div>ENG</div><div>IN</div></div>
        <svg viewBox="0 0 20 16" className="ml-[23px] h-[16px] w-[20px]" fill="none" stroke="#1b1b1b" strokeWidth="1.500"><path d="M1 6q9-9 18 0M4 9q6-6 12 0M6.700 11.700q3.300-3 6.600 0" /><circle cx="10" cy="14" r="1.400" fill="#1b1b1b" stroke="none" /></svg>
        <svg viewBox="0 0 20 18" className="ml-[10px] h-[18px] w-[20px]" fill="none" stroke="#1b1b1b" strokeWidth="1.300"><path d="M1 6.500h3L8.500 2v14L4 11.500H1z" /><path d="M11 6.300q2 2.700 0 5.400M13.500 4q3.500 5 0 10" /><path d="M16 2q5 7 0 14" stroke="#9fbcbe" /></svg>
        <svg viewBox="0 0 21 17" className="ml-[10px] h-[17px] w-[21px]"><rect x="2" y="5" width="16" height="10.500" rx="2" fill="none" stroke="#1b1b1b" strokeWidth="1.500" /><path d="M4 9l4-2h8v6.500H4z" fill="#1b1b1b" /><path d="M19 8.500h1.500v4H19zM5 0L0 6h3L2 10l5-6H4z" fill="#1b1b1b" /></svg>
        <div className="ml-[20px] pb-[3px] text-right text-[15px] leading-[20px]"><div className="tracking-[-0.33px]">12:41 PM</div><div className="tracking-[-0.08px]">23-08-2025</div></div>
      </div>
    </div>
  );
}

export default function App() {
  return (
    <div className="relative flex h-[1080px] w-[1920px] flex-col overflow-hidden font-['Open_Sans',sans-serif]">
      <TabStrip />
      <AddressBar />
      <BookmarksBar />
      <div className="flex flex-1 flex-col bg-[#f8fafd] font-['Inter',sans-serif]">
        <MailHeader />
        <div className="flex flex-1">
          <Sidebar />
          <div className="mb-[20px] flex flex-1"><Message /></div>
          <SidePanel />
        </div>
      </div>
      <Taskbar />
      <Toast />
    </div>
  );
}
